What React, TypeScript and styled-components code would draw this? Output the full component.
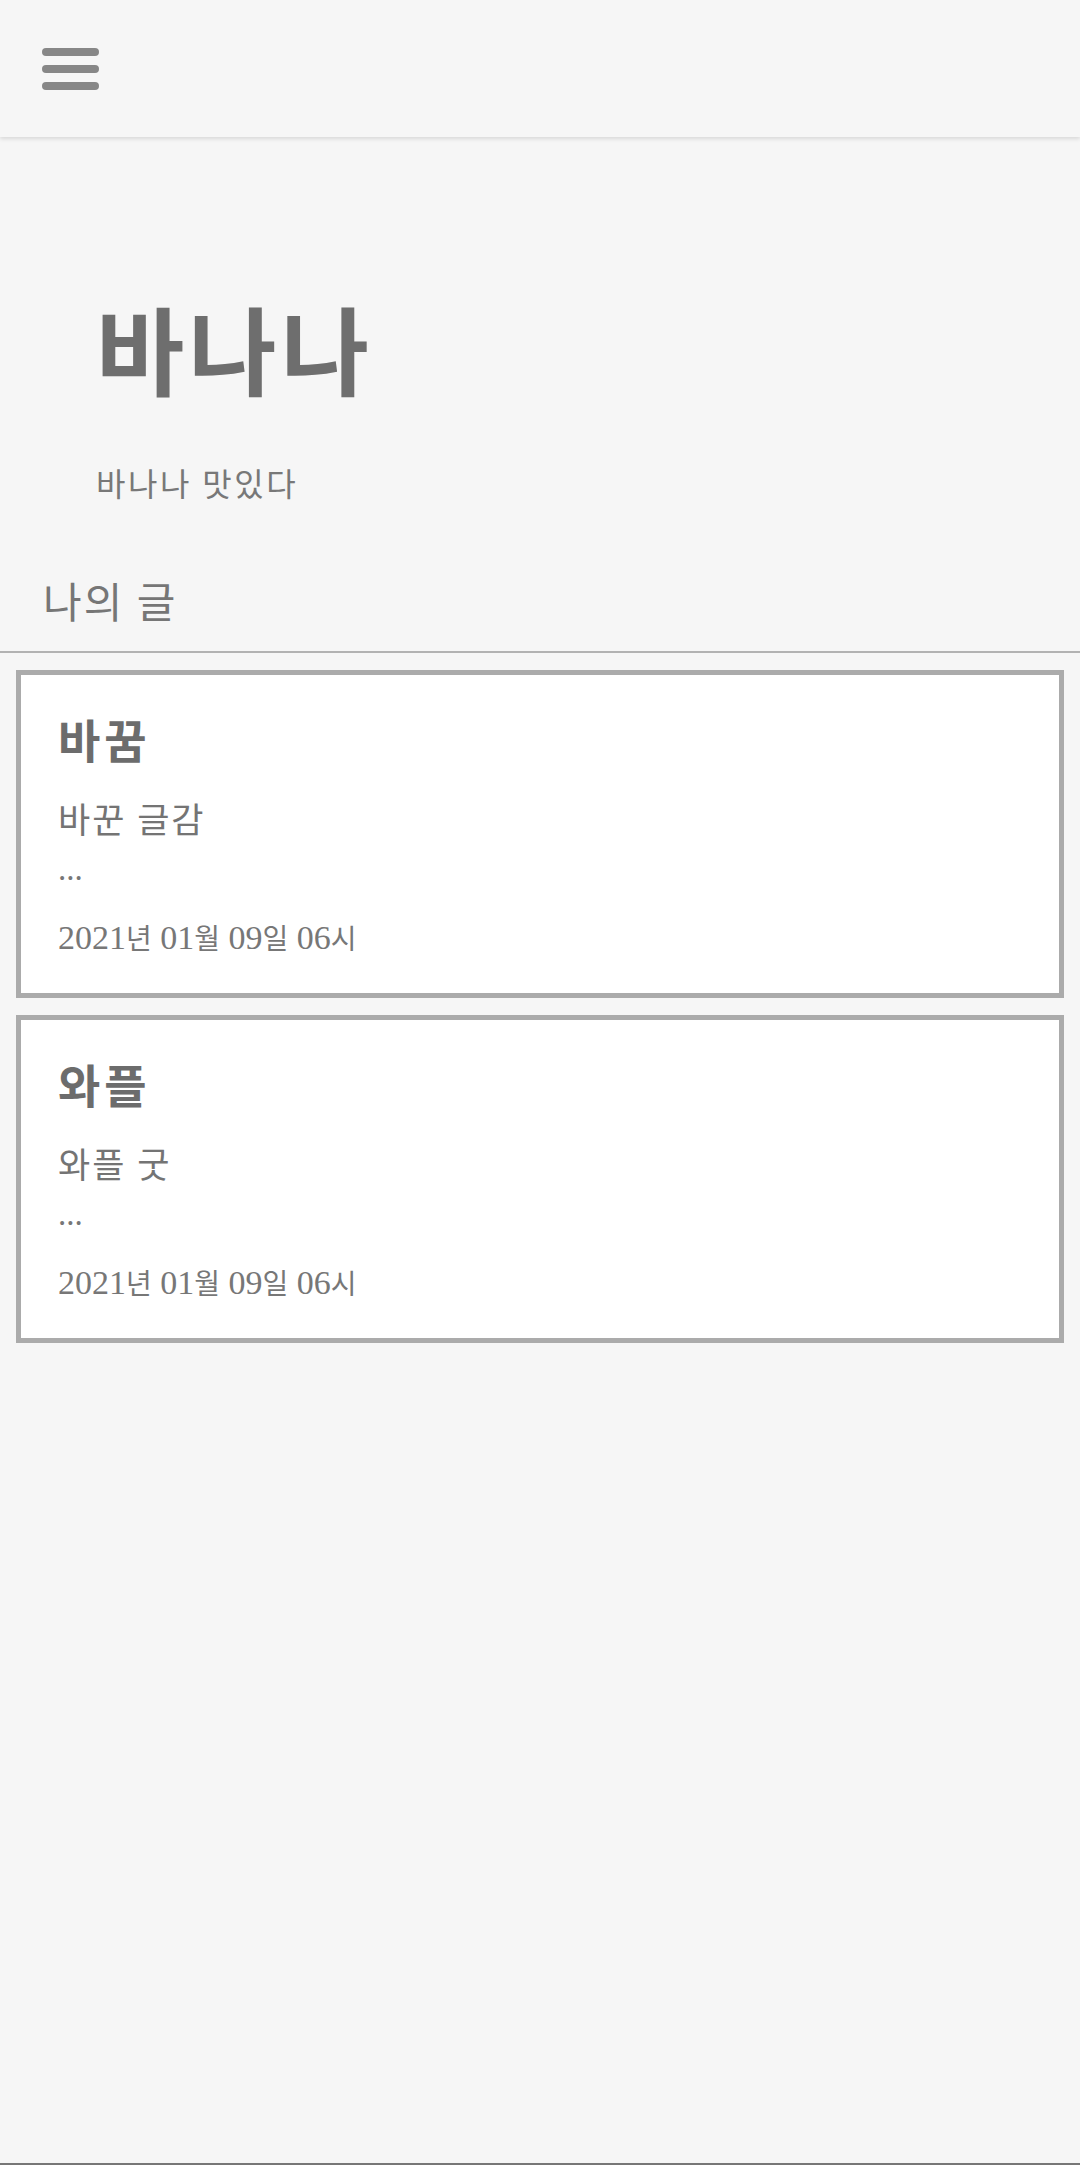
import React from "react";
import styled, { createGlobalStyle } from "styled-components";

interface DatePart {
  value: string;
  unit: string;
}

interface Post {
  id: number;
  title: string;
  summary: string;
  date: DatePart[];
}

const written: DatePart[] = [
  { value: "2021", unit: "년" },
  { value: "01", unit: "월" },
  { value: "09", unit: "일" },
  { value: "06", unit: "시" },
];

const posts: Post[] = [
  { id: 1, title: "바꿈", summary: "바꾼 글감", date: written },
  { id: 2, title: "와플", summary: "와플 굿", date: written },
];

export default function App() {
  return (
    <>
      <GlobalStyle />
      <Page>
        <Header>
          <MenuButton aria-label="menu">
            <svg width="57" height="42" viewBox="0 0 57 42">
              <rect x="0" y="0" width="57" height="8" rx="4" fill="#878787" />
              <rect x="0" y="17" width="57" height="8" rx="4" fill="#878787" />
              <rect x="0" y="34" width="57" height="8" rx="4" fill="#878787" />
            </svg>
          </MenuButton>
        </Header>

        <Hero>
          <BlogTitle>바나나</BlogTitle>
          <BlogIntro>바나나 맛있다</BlogIntro>
        </Hero>

        <SectionTitle>나의 글</SectionTitle>
        <Divider />

        <PostList>
          {posts.map((post) => (
            <PostCard key={post.id}>
              <PostTitle>{post.title}</PostTitle>
              <PostSummary>{post.summary}</PostSummary>
              <Ellipsis>...</Ellipsis>
              <PostDate>
                {post.date.map((part, i) => (
                  <React.Fragment key={part.unit}>
                    {i > 0 && " "}
                    {part.value}
                    <DateUnit>{part.unit}</DateUnit>
                  </React.Fragment>
                ))}
              </PostDate>
            </PostCard>
          ))}
        </PostList>
      </Page>
    </>
  );
}

const GlobalStyle = createGlobalStyle`
  * {
    box-sizing: border-box;
  }

  body {
    margin: 0;
    background: #f6f6f6;
    font-family: "Liberation Serif", "Noto Sans CJK KR", serif;
    color: #747474;
  }
`;

const Page = styled.div`
  min-height: 100vh;
  display: flex;
  flex-direction: column;
  background: #f6f6f6;
  border-bottom: 2px solid #777777;
`;

const Header = styled.header`
  height: 137px;
  display: flex;
  align-items: center;
  padding-left: 42px;
  background: #f6f6f6;
  box-shadow: 0 2px 4px rgba(0, 0, 0, 0.12);
`;

const MenuButton = styled.button`
  display: flex;
  padding: 0;
  border: none;
  background: none;
  cursor: pointer;
`;

const Hero = styled.section`
  display: flex;
  flex-direction: column;
  padding: 171px 0 0 96px;
`;

const BlogTitle = styled.h1`
  margin: 0;
  font-size: 96px;
  line-height: 1;
  font-weight: 700;
  letter-spacing: 4px;
  color: #6e6e6e;
`;

const BlogIntro = styled.p`
  margin: 65px 0 0;
  font-size: 32px;
  line-height: 1;
  letter-spacing: 2.5px;
  color: #787878;
`;

const SectionTitle = styled.h2`
  margin: 82px 0 0 43px;
  font-size: 42px;
  line-height: 1;
  font-weight: 400;
  letter-spacing: 2px;
  color: #767676;
`;

const Divider = styled.hr`
  margin: 26px 0 0;
  border: none;
  height: 2px;
  background: #b2b2b2;
`;

const PostList = styled.div`
  display: flex;
  flex-direction: column;
  gap: 17px;
  padding: 17px 16px 0;
`;

const PostCard = styled.article`
  display: flex;
  flex-direction: column;
  padding: 45px 37px 38px;
  background: #ffffff;
  border: 5px solid #ababab;
`;

const PostTitle = styled.h3`
  margin: 0;
  font-size: 46px;
  line-height: 1;
  font-weight: 700;
  letter-spacing: 4px;
  color: #6c6c6c;
`;

const PostSummary = styled.p`
  margin: 38px 0 0;
  font-size: 35px;
  line-height: 1;
  letter-spacing: 2px;
  color: #747474;
`;

const Ellipsis = styled.span`
  margin-top: 14px;
  font-size: 33px;
  line-height: 1;
  color: #777777;
`;

const PostDate = styled.span`
  margin-top: 35px;
  font-size: 34px;
  line-height: 1;
  color: #777777;
`;

const DateUnit = styled.span`
  font-family: "Noto Sans CJK KR", sans-serif;
  font-size: 28px;
`;
